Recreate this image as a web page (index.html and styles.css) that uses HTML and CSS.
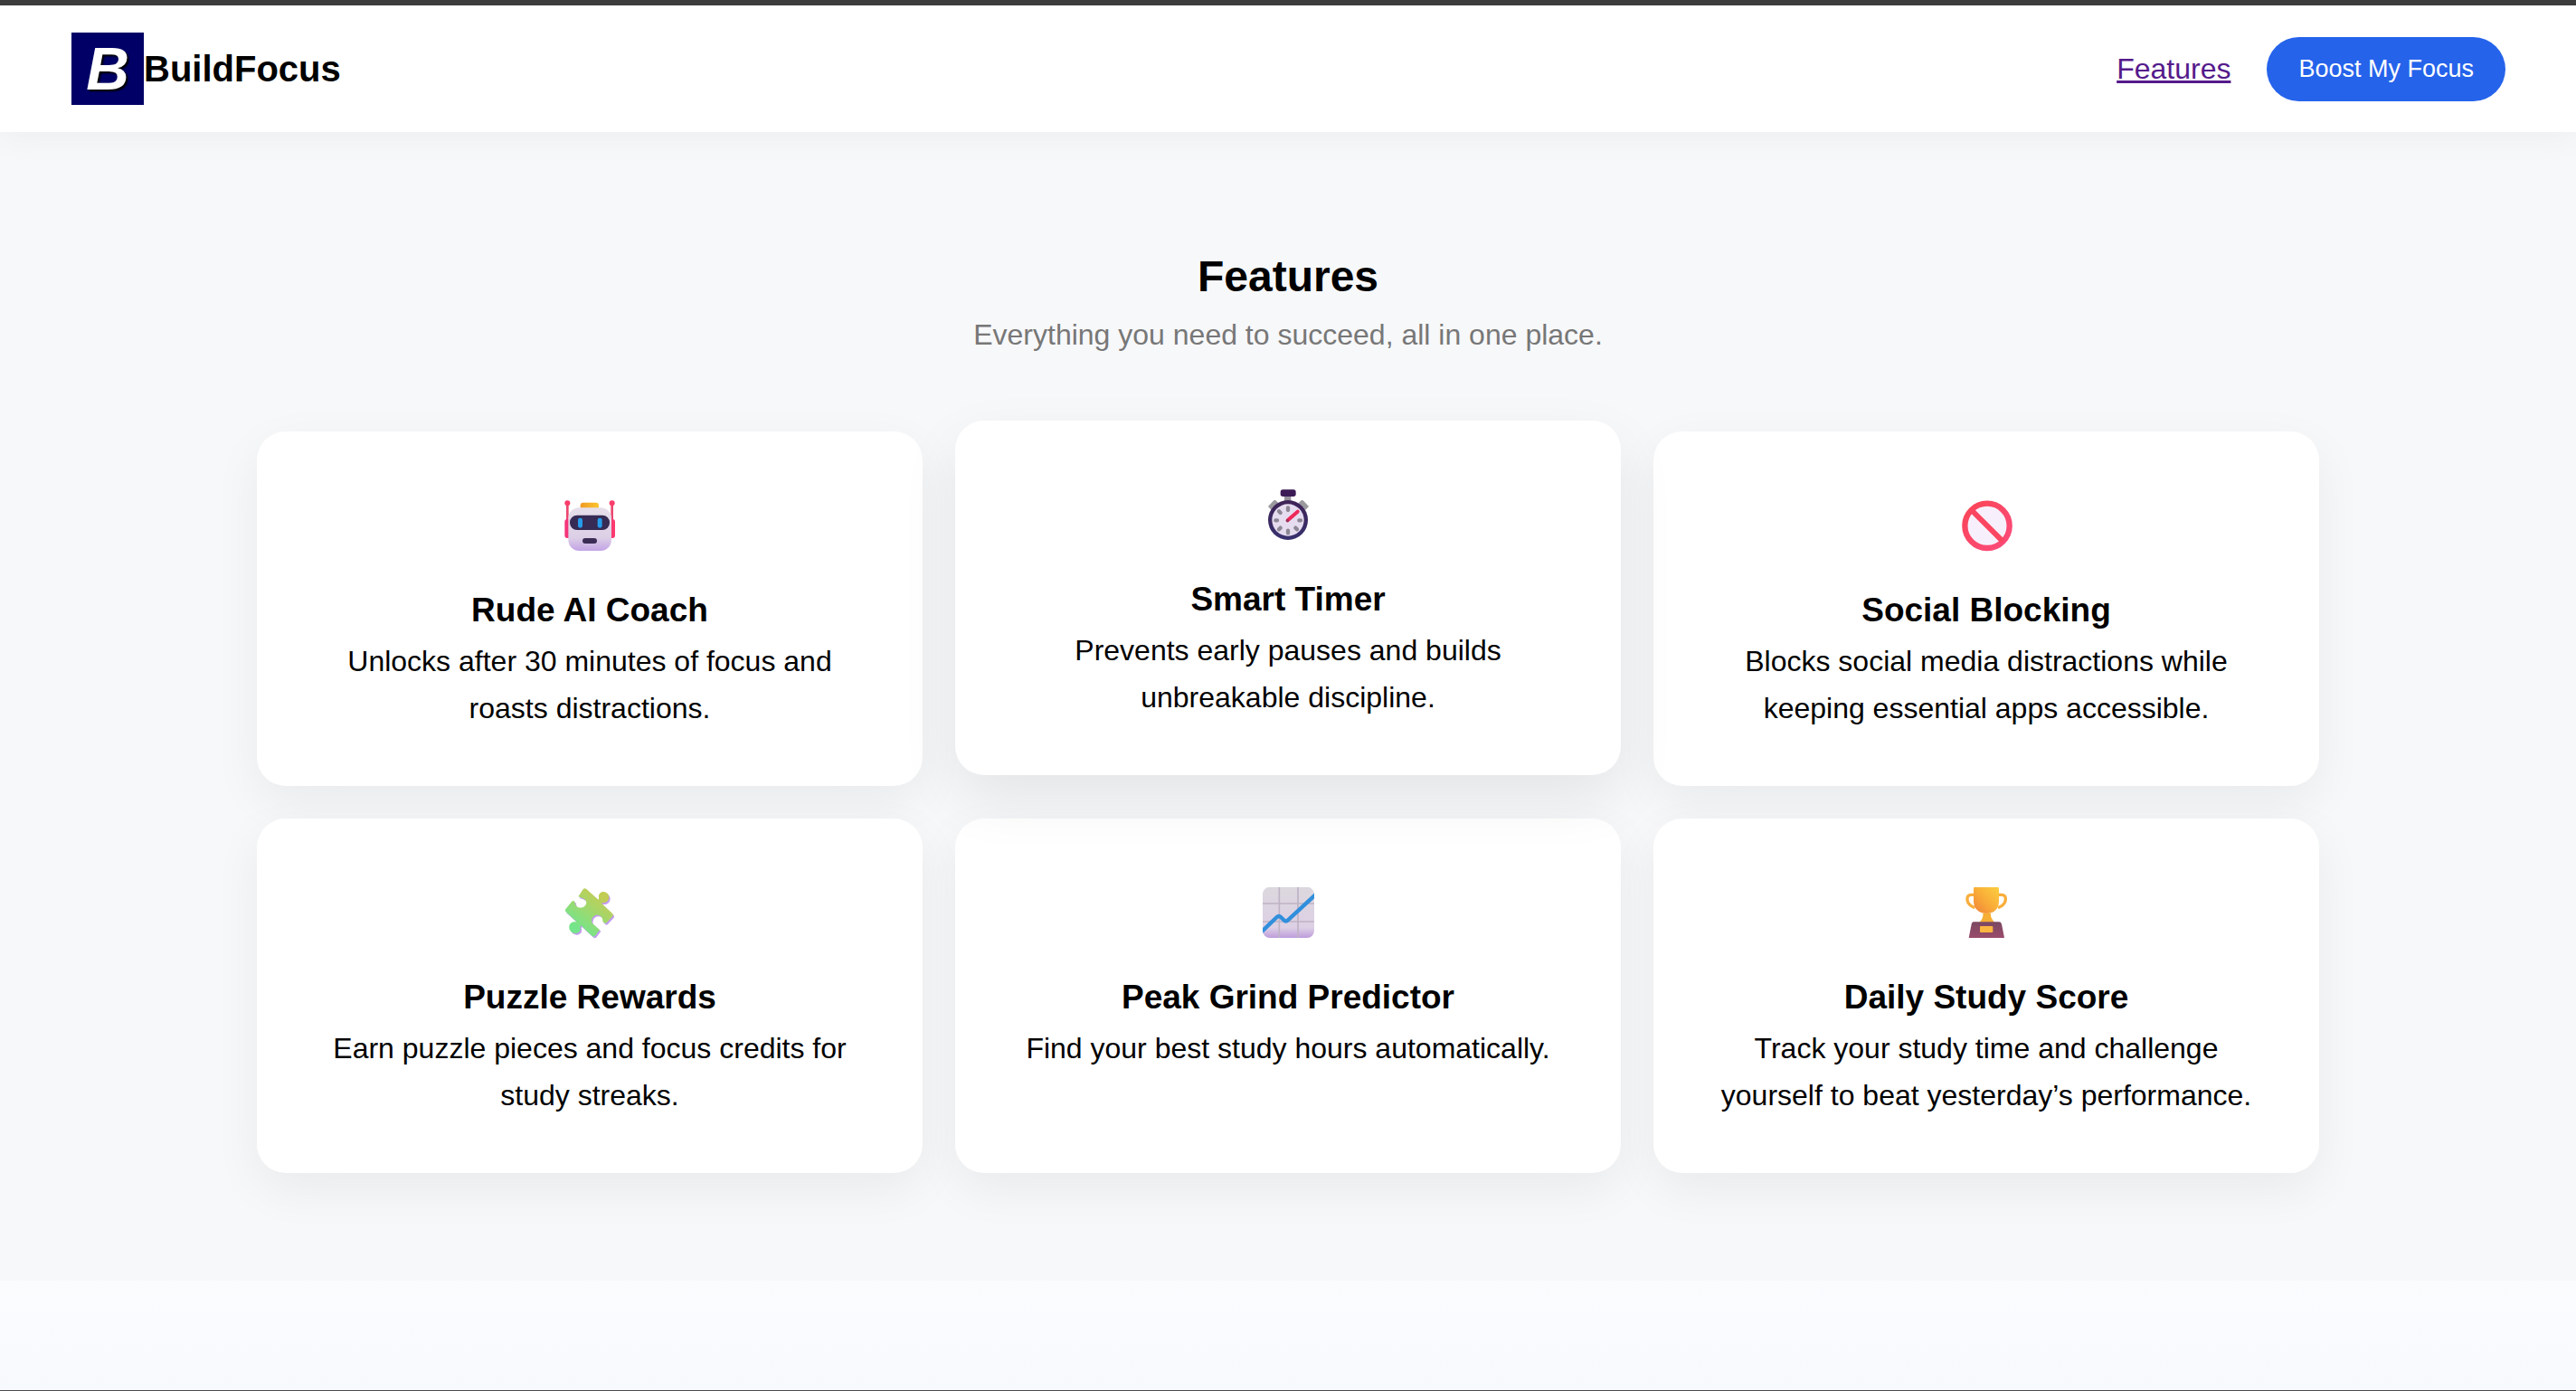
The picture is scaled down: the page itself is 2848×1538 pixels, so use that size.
FILE: index.html
```html
<!DOCTYPE html>
<html lang="en">
<head>
<meta charset="utf-8">
<meta name="viewport" content="width=device-width, initial-scale=1">
<title>BuildFocus</title>
<link rel="stylesheet" href="styles.css">
</head>
<body>
<header class="navbar">
  <div class="brand">
    <span class="brand-mark" aria-hidden="true">B</span>
    <span class="brand-name">BuildFocus</span>
  </div>
  <nav class="nav-links">
    <a class="nav-link" href="#features">Features</a>
    <button class="cta" type="button">Boost My Focus</button>
  </nav>
</header>

<main class="features" id="features">
  <h1 class="features-title">Features</h1>
  <p class="features-subtitle">Everything you need to succeed, all in one place.</p>

  <div class="grid">
    <article class="card">
      <svg class="icon" viewBox="60 57 192 192" aria-hidden="true">
        <defs>
          <linearGradient id="robotHead" x1="0" y1="0" x2="0" y2="1"><stop offset="0" stop-color="#e6dfea"/><stop offset=".7" stop-color="#dccfe6"/><stop offset="1" stop-color="#c3a3e6"/></linearGradient>
          <linearGradient id="robotCap" x1="0" y1="0" x2="1" y2="0"><stop offset="0" stop-color="#f09a25"/><stop offset="1" stop-color="#fbc52e"/></linearGradient>
        </defs>
        <path d="M82 80v60M230 80v60" stroke="#ec4770" stroke-width="8"/>
        <circle cx="82" cy="79" r="9" fill="#fb3d6b"/><circle cx="230" cy="79" r="9" fill="#fb3d6b"/>
        <rect x="73" y="132" width="24" height="63" rx="9" fill="#f5347a"/>
        <rect x="216" y="132" width="24" height="63" rx="9" fill="#fb3a70"/>
        <rect x="125" y="77" width="61" height="26" rx="9" fill="url(#robotCap)"/>
        <rect x="85" y="94" width="143" height="143" rx="36" fill="url(#robotHead)"/>
        <rect x="90" y="119" width="132" height="49" rx="24" fill="#352b54"/>
        <rect x="117" y="128" width="15" height="33" rx="7" fill="#259bea"/>
        <rect x="182" y="128" width="15" height="33" rx="7" fill="#259bea"/>
        <rect x="132" y="195" width="48" height="18" rx="9" fill="#3a2c55"/>
      </svg>
      <h2 class="card-title">Rude AI Coach</h2>
      <p class="card-text">Unlocks after 30 minutes of focus and roasts distractions.</p>
    </article>

    <article class="card card-raised">
      <svg class="icon" viewBox="66 51 192 192" aria-hidden="true">
        <defs>
          <linearGradient id="watchRim" x1="0" y1="0" x2="0" y2="1"><stop offset="0" stop-color="#3e2355"/><stop offset="1" stop-color="#38316f"/></linearGradient>
        </defs>
        <rect x="150" y="80" width="22" height="26" fill="#96929b"/>
        <rect x="137" y="64" width="51" height="23" rx="8" fill="#3b1a56"/>
        <path d="M96 120l19-20q3-2 6 0l9 8-23 23zM231 120l-19-20q-3-2-6 0l-9 8 23 23z" fill="#9a999e"/>
        <circle cx="162" cy="165" r="66" fill="url(#watchRim)"/>
        <circle cx="162" cy="165" r="53" fill="#e6dcf0"/>
        <g stroke="#8d8795" stroke-width="13" stroke-linecap="round">
          <path d="M162 124v8M162 200v8M121 166h5M199 166h5M132 136l5 5M132 196l5-5M192 196l-5-5"/>
        </g>
        <path d="M161 166l33-29" stroke="#ee2759" stroke-width="12" stroke-linecap="round"/>
        <circle cx="160" cy="167" r="5" fill="#95345e"/>
      </svg>
      <h2 class="card-title">Smart Timer</h2>
      <p class="card-text">Prevents early pauses and builds unbreakable discipline.</p>
    </article>

    <article class="card">
      <svg class="icon" viewBox="72 57 192 192" aria-hidden="true">
        <defs>
          <linearGradient id="banRing" x1="0" y1="0" x2="1" y2="1"><stop offset="0" stop-color="#fa4656"/><stop offset="1" stop-color="#fb4a7c"/></linearGradient>
        </defs>
        <circle cx="171" cy="154" r="74" fill="#f7f0fc" stroke="url(#banRing)" stroke-width="19"/>
        <path d="M119 102l104 104" stroke="#fa4661" stroke-width="18"/>
      </svg>
      <h2 class="card-title">Social Blocking</h2>
      <p class="card-text">Blocks social media distractions while keeping essential apps accessible.</p>
    </article>

    <article class="card">
      <svg class="icon" viewBox="60 51 192 192" aria-hidden="true">
        <defs>
          <linearGradient id="puzzleFace" gradientUnits="userSpaceOnUse" x1="105" y1="190" x2="185" y2="85"><stop offset="0" stop-color="#74e58a"/><stop offset=".45" stop-color="#99da72"/><stop offset="1" stop-color="#c2cd55"/></linearGradient>
          <path id="puzzleShape" d="M118 94L134 70Q139 64 145 69L184 104C188 100 185 94 186 90C190 74 212 75 219 90C223 106 211 116 198 115L195 116L231 150Q235 155 232 159L212 181Q208 185 204 181L199 177C200 164 192 154 179 155C166 157 159 170 164 182L169 187L189 204L175 223Q170 230 163 224L127 190C122 193 126 198 125 205C119 221 96 219 89 203C84 188 94 176 108 178L113 178L77 145Q72 139 77 134L96 111Q101 106 106 110L108 119C112 130 125 134 136 128C147 121 147 109 139 103L130 98Z"/>
        </defs>
        <use href="#puzzleShape" x="4" y="5" fill="#c39bf0"/>
        <use href="#puzzleShape" fill="url(#puzzleFace)"/>
      </svg>
      <h2 class="card-title">Puzzle Rewards</h2>
      <p class="card-text">Earn puzzle pieces and focus credits for study streaks.</p>
    </article>

    <article class="card">
      <svg class="icon" viewBox="66 51 192 192" aria-hidden="true">
        <defs>
          <linearGradient id="chartPaper" x1="0" y1="0" x2="0" y2="1"><stop offset="0" stop-color="#dcd8de"/><stop offset=".8" stop-color="#ddd0e5"/><stop offset="1" stop-color="#bd9cdb"/></linearGradient>
          <clipPath id="chartClip"><rect x="78" y="62" width="171" height="169" rx="24"/></clipPath>
        </defs>
        <g clip-path="url(#chartClip)">
          <rect x="78" y="62" width="171" height="169" fill="url(#chartPaper)"/>
          <path d="M133 62v169M195 62v169M78 117h171M78 177h171" stroke="#beb3c4" stroke-width="5" fill="none"/>
          <path d="M74 211L125 162Q132 156 138 162L148 172Q155 179 162 172L254 87" stroke="#318fdc" stroke-width="13" fill="none"/>
        </g>
      </svg>
      <h2 class="card-title">Peak Grind Predictor</h2>
      <p class="card-text">Find your best study hours automatically.</p>
    </article>

    <article class="card">
      <svg class="icon" viewBox="72 51 192 192" aria-hidden="true">
        <defs>
          <linearGradient id="cupGold" x1="0" y1="1" x2="1" y2="0"><stop offset="0" stop-color="#f0803b"/><stop offset=".5" stop-color="#f9ad38"/><stop offset="1" stop-color="#fcce40"/></linearGradient>
          <linearGradient id="cupBase" x1="0" y1="0" x2="0" y2="1"><stop offset="0" stop-color="#7b4861"/><stop offset="1" stop-color="#9a4c6b"/></linearGradient>
        </defs>
        <path d="M130 88h-12c-18 0-17 25 0 37l12 6M207 88h12c18 0 17 25 0 37l-12 6" fill="none" stroke="#f9ae3b" stroke-width="10"/>
        <path d="M126 67q0-4 4-4h76q4 0 4 4v42c0 26-16 41-41 41s-43-15-43-41z" fill="url(#cupGold)"/>
        <path d="M157 149h26c-1 13 3 18 12 30h-49c9-12 12-17 11-30z" fill="#f6ae34"/>
        <path d="M126 178h84q7 0 9 7l9 46h-118l9-46q2-7 7-7z" fill="url(#cupBase)"/>
        <rect x="147" y="192" width="43" height="21" rx="3" fill="#fbb541"/>
      </svg>
      <h2 class="card-title">Daily Study Score</h2>
      <p class="card-text">Track your study time and challenge yourself to beat yesterday’s performance.</p>
    </article>
  </div>
</main>
<div class="next-section"></div>
</body>
</html>
```
FILE: styles.css
```css
* {
  box-sizing: border-box;
}

body {
  margin: 0;
  min-height: 100vh;
  display: flex;
  flex-direction: column;
  border-top: 6px solid #3c3c3c;
  border-bottom: 1px solid #4a4a4e;
  background: #f7f8fa;
  color: #000;
  font-family: Arial, "Liberation Sans", sans-serif;
  font-size: 32px;
  line-height: 52px;
}

h1,
h2,
p {
  margin: 0;
}

.navbar {
  display: flex;
  align-items: center;
  justify-content: space-between;
  padding: 30px 78px 30px 79px;
  background: #fff;
  box-shadow: 0 4px 36px rgba(0, 0, 0, 0.05);
}

.brand {
  display: flex;
  align-items: center;
}

.brand-mark {
  display: flex;
  align-items: center;
  justify-content: center;
  width: 80px;
  height: 80px;
  background: #000066;
  color: #fff;
  font-size: 66px;
  font-style: italic;
  font-weight: bold;
  text-shadow: 2px 2px 2px #000;
}

.brand-name {
  font-size: 40px;
  font-weight: bold;
}

.nav-links {
  display: flex;
  align-items: center;
  gap: 40px;
}

.nav-link {
  color: #551a8b;
  text-decoration-thickness: 3px;
}

.cta {
  padding: 18px 35px;
  border: 0;
  border-radius: 36px;
  background: #2563eb;
  color: #fff;
  font: inherit;
  font-size: 27px;
  line-height: 35px;
}

.features {
  padding: 132px 40px 119px;
  text-align: center;
}

.features-title {
  font-size: 48px;
  line-height: 56px;
}

.features-subtitle {
  margin-top: 10px;
  color: #777;
}

.grid {
  display: grid;
  grid-template-columns: repeat(3, 1fr);
  gap: 36px;
  max-width: 2280px;
  margin: 81px auto 0;
}

.card {
  padding: 60px;
  border-radius: 32px;
  background: #fff;
  box-shadow: 0 18px 54px rgba(0, 0, 0, 0.06);
}

.card-raised {
  transform: translateY(-12px);
  box-shadow: 0 26px 64px rgba(0, 0, 0, 0.08);
}

.icon {
  display: block;
  width: 64px;
  height: 64px;
  margin: 12px auto 40px;
}

.card-title {
  margin-bottom: 8px;
  font-size: 37px;
  line-height: 44px;
}

.next-section {
  flex: 1;
  background: linear-gradient(#fbfcfe, #f8f9fd);
}
```
